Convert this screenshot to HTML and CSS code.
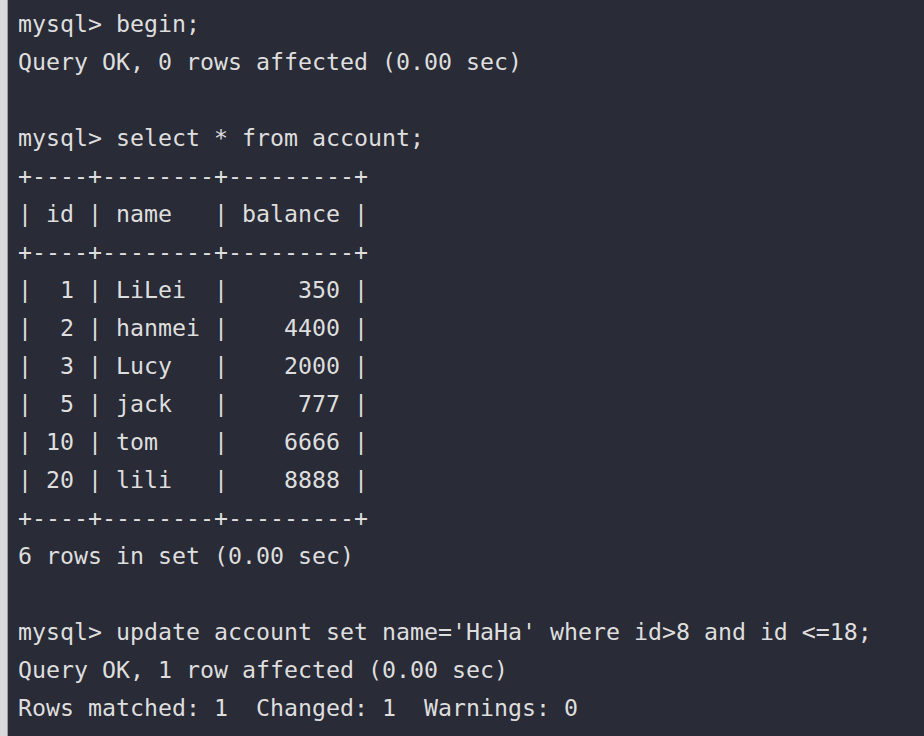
FILE: index.html
```html
<!DOCTYPE html>
<html>
<head>
<meta charset="utf-8">
<link rel="stylesheet" href="styles.css">
</head>
<body>
<div class="window">
  <div class="edge"></div>
  <pre class="terminal">mysql&gt; begin;
Query OK, 0 rows affected (0.00 sec)

mysql&gt; select * from account;
+----+--------+---------+
| id | name   | balance |
+----+--------+---------+
|  1 | LiLei  |     350 |
|  2 | hanmei |    4400 |
|  3 | Lucy   |    2000 |
|  5 | jack   |     777 |
| 10 | tom    |    6666 |
| 20 | lili   |    8888 |
+----+--------+---------+
6 rows in set (0.00 sec)

mysql&gt; update account set name='HaHa' where id&gt;8 and id &lt;=18;
Query OK, 1 row affected (0.00 sec)
Rows matched: 1  Changed: 1  Warnings: 0</pre>
</div>
</body>
</html>
```
FILE: styles.css
```css
html, body {
  margin: 0;
  padding: 0;
  height: 100%;
  background: #292b36;
  overflow: hidden;
}
.window {
  display: flex;
  height: 736px;
}
.edge {
  width: 7px;
  flex: none;
  background: #d9d9d9;
  border-right: 1px solid #9a9ba0;
}
.terminal {
  flex: 1;
  margin: 0;
  padding: 5px 0 0 10px;
  background: #292b36;
  color: #dedede;
  font-family: "DejaVu Sans Mono", monospace;
  font-size: 23.25px;
  line-height: 38px;
  white-space: pre;
}
```
